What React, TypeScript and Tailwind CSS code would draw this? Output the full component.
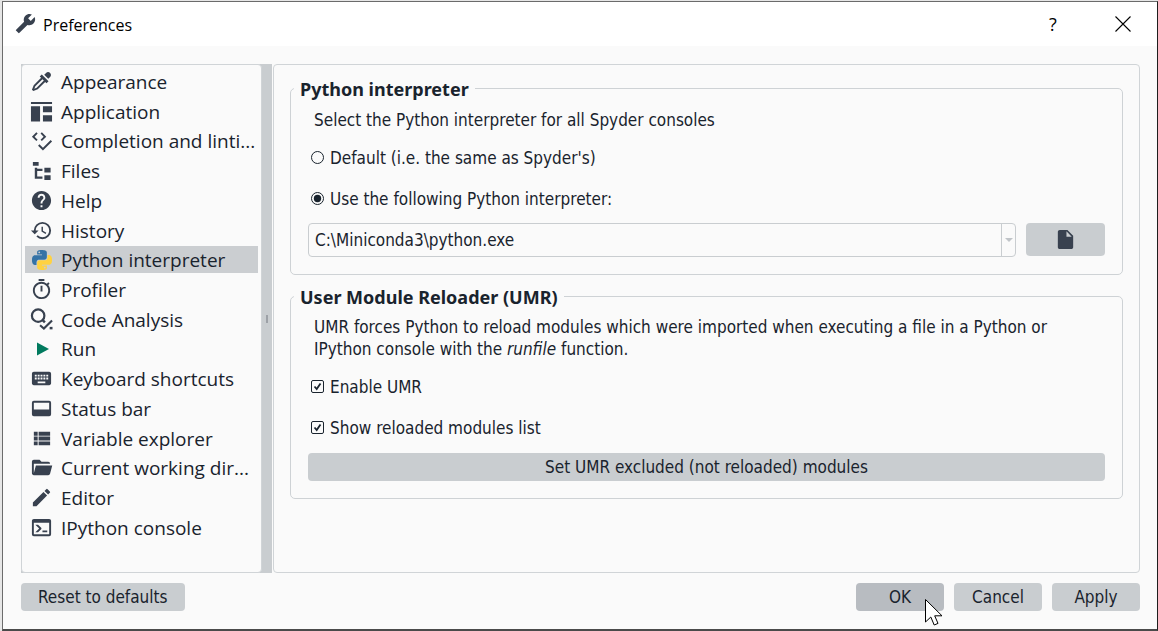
import { useState, type ReactNode } from "react";
import {
  MdEdit,
  MdHelp,
  MdHistory,
  MdInsertDriveFile,
  MdKeyboard,
  MdOutlineTimer,
} from "react-icons/md";

function Glyph({ d, className = "h-[23px] w-[23px]" }: { d: string; className?: string }) {
  return (
    <svg viewBox="0 0 24 24" fill="currentColor" fillRule="evenodd" className={className} aria-hidden="true">
      <path d={d} />
    </svg>
  );
}

const WRENCH =
  "M1.3,19L10.4,9.9C9.5,7.6 10,4.9 11.9,3C13.9,1 16.9,0.6 19.3,1.7L15,6L18,9L22.4,4.7C23.6,7.1 23.1,10.1 21.1,12.1C19.2,14 16.5,14.5 14.2,13.6L5.1,22.7C4.7,23.1 4.1,23.1 3.7,22.7L1.4,20.4C0.9,20 0.9,19.3 1.3,19Z";
const EYEDROPPER =
  "M19.35,11.72L17.22,13.85L15.81,12.43L8.1,20.14L3.5,22L2,20.5L3.86,15.9L11.57,8.19L10.15,6.78L12.28,4.65L19.35,11.72M16.76,3C17.93,1.83 19.83,1.83 21,3C22.17,4.17 22.17,6.07 21,7.24L19.08,9.16L14.84,4.92L16.76,3M5.56,17.03L4.5,19.5L6.97,18.44L14.4,11L13,9.6L5.56,17.03Z";
const LAYOUT = "M1,2H23V4.3H1V2M1,6.5H10.5V22.5H1V6.5M13.5,6.5H23V12.8H13.5V6.5M13.5,16H23V22.5H13.5V16Z";
const CODE_CHECK =
  "M6.59,3.41L2,8L6.59,12.6L8,11.18L4.82,8L8,4.82L6.59,3.41M12.41,3.41L11,4.82L14.18,8L11,11.18L12.41,12.6L17,8L12.41,3.41M21.59,11.59L13.5,19.68L9.83,16L8.42,17.41L13.5,22.5L23,13L21.59,11.59Z";
const FILE_TREE =
  "M3,3H9V7H3V3M15,9H21.5V14H15V9M15,17H21.5V22H15V17M13,12.5H7.5V18.2H13V20.6H7L5,20.6V9H7.5V10.3H13V12.5Z";
const DOCK_BOTTOM =
  "M20,4H4A2,2 0 0,0 2,6V18A2,2 0 0,0 4,20H20A2,2 0 0,0 22,18V6A2,2 0 0,0 20,4M20,13H4V6H20V13Z";
const VIEW_LIST = "M9,5V9H21V5M9,19H21V15H9M9,14H21V10H9M4,9H8V5H4M4,19H8V15H4M4,14H8V10H4V14Z";
const FOLDER_OPEN =
  "M19,20H4C2.89,20 2,19.1 2,18V6C2,4.89 2.89,4 4,4H10L12,6H19A2,2 0 0,1 21,8H21L4,8V18L6.14,10H23.21L20.93,18.5C20.7,19.37 19.92,20 19,20Z";
const CONSOLE =
  "M20,19V7H4V19H20M20,3A2,2 0 0,1 22,5V19A2,2 0 0,1 20,21H4A2,2 0 0,1 2,19V5C2,3.89 2.9,3 4,3H20M13,17V15H18V17H13M9.58,13L5.57,9H8.4L11.7,12.3C12.09,12.69 12.09,13.33 11.7,13.72L8.42,17H5.59L9.58,13Z";

function PythonLogo() {
  return (
    <svg viewBox="0 0 24 24" fillRule="evenodd" className="h-5 w-5" aria-hidden="true">
      <path
        fill="#3573a6"
        d="M14.25.18l.9.2.73.26.59.3.45.32.34.34.25.34.16.33.1.3.04.26.02.2-.01.13V8.5l-.05.63-.13.55-.21.46-.26.38-.3.31-.33.25-.35.19-.35.14-.33.1-.3.07-.26.04-.21.02H8.77l-.69.05-.59.14-.5.22-.41.27-.33.32-.27.35-.2.36-.15.37-.1.35-.07.32-.04.27-.02.21v3.06H3.17l-.21-.03-.28-.07-.32-.12-.35-.18-.36-.26-.36-.36-.35-.46-.32-.59-.28-.73-.21-.88-.14-1.05-.05-1.23.06-1.22.16-1.04.24-.87.32-.71.36-.57.4-.44.42-.33.42-.24.4-.16.36-.1.32-.05.24-.01h.16l.06.01h8.16v-.83H6.18l-.01-2.75-.02-.37.05-.34.11-.31.17-.28.25-.26.31-.23.38-.2.44-.18.51-.15.58-.12.64-.1.71-.06.77-.04.84-.02 1.27.05zm-6.3 1.98l-.23.33-.08.41.08.41.23.34.33.22.41.09.41-.09.33-.22.23-.34.08-.41-.08-.41-.23-.33-.33-.22-.41-.09-.41.09z"
      />
      <path
        fill="#ffd241"
        d="M21.04 6.11l.28.06.32.12.35.18.36.27.36.35.35.47.32.59.28.73.21.88.14 1.04.05 1.23-.06 1.23-.16 1.04-.24.86-.32.71-.36.57-.4.45-.42.33-.42.24-.4.16-.36.09-.32.05-.24.02-.16-.01h-8.22v.82h5.84l.01 2.76.02.36-.05.34-.11.31-.17.29-.25.25-.31.24-.38.2-.44.17-.51.15-.58.13-.64.09-.71.07-.77.04-.84.01-1.27-.04-1.07-.14-.9-.2-.73-.25-.59-.3-.45-.33-.34-.34-.25-.34-.16-.33-.1-.3-.04-.25-.02-.2.01-.13v-5.34l.05-.64.13-.54.21-.46.26-.38.3-.32.33-.24.35-.2.35-.14.33-.1.3-.06.26-.04.21-.02.13-.01h5.84l.69-.05.59-.14.5-.21.41-.28.33-.32.27-.35.2-.36.15-.36.1-.35.07-.32.04-.28.02-.21V6.07h2.09l.14.01zm-6.47 14.25l-.23.33-.08.41.08.41.23.33.33.23.41.08.41-.08.33-.23.23-.33.08-.41-.08-.41-.23-.33-.33-.23-.41-.08-.41.08z"
      />
    </svg>
  );
}

function CodeAnalysisIcon() {
  return (
    <svg viewBox="0 0 24 24" fill="none" stroke="currentColor" className="h-[23px] w-[23px]" aria-hidden="true">
      <circle cx="8.5" cy="8" r="6.5" strokeWidth="2.3" />
      <path d="M13 12.5l2.5 2.5" strokeWidth="2.6" />
      <path d="M10.5 18l4 3.5L23 13" strokeWidth="2.2" />
      <path d="M20.5 21h3" strokeWidth="2.6" />
    </svg>
  );
}

function RunIcon() {
  return (
    <svg viewBox="0 0 12 14" className="ml-[3px] h-[14px] w-3" aria-hidden="true">
      <path d="M0 0.5L12 7L0 13.5Z" fill="#007a5e" />
    </svg>
  );
}

const PAGES: { label: string; title?: string; icon: ReactNode }[] = [
  { label: "Appearance", icon: <Glyph d={EYEDROPPER} /> },
  { label: "Application", icon: <Glyph d={LAYOUT} /> },
  { label: "Completion and linti...", title: "Completion and linting", icon: <Glyph d={CODE_CHECK} /> },
  { label: "Files", icon: <Glyph d={FILE_TREE} /> },
  { label: "Help", icon: <MdHelp className="h-[23px] w-[23px]" /> },
  { label: "History", icon: <MdHistory className="h-[23px] w-[23px]" /> },
  { label: "Python interpreter", icon: <PythonLogo /> },
  { label: "Profiler", icon: <MdOutlineTimer className="h-[23px] w-[23px]" /> },
  { label: "Code Analysis", icon: <CodeAnalysisIcon /> },
  { label: "Run", icon: <RunIcon /> },
  { label: "Keyboard shortcuts", icon: <MdKeyboard className="h-[23px] w-[23px]" /> },
  { label: "Status bar", icon: <Glyph d={DOCK_BOTTOM} /> },
  { label: "Variable explorer", icon: <Glyph d={VIEW_LIST} /> },
  { label: "Current working dir...", title: "Current working directory", icon: <Glyph d={FOLDER_OPEN} /> },
  { label: "Editor", icon: <MdEdit className="h-[23px] w-[23px]" /> },
  { label: "IPython console", icon: <Glyph d={CONSOLE} /> },
];

function TitleBar() {
  return (
    <header className="flex h-11 items-center bg-white pl-3 pr-[22px] font-['Open_Sans','Noto_Sans',sans-serif] text-black">
      <Glyph d={WRENCH} className="mb-0.5 h-[21px] w-[21px] text-[#38414f]" />
      <h1 className="ml-[7px] flex-1 pt-px text-base leading-6">Preferences</h1>
      <button type="button" aria-label="Help" className="w-8 text-lg leading-6">
        ?
      </button>
      <button type="button" aria-label="Close" className="ml-[42px] flex h-6 w-6 items-center justify-center">
        <svg viewBox="0 0 16 16" className="h-4 w-4" stroke="currentColor" strokeWidth="1.1" aria-hidden="true">
          <path d="M0.5 0.5L15.5 15.5M15.5 0.5L0.5 15.5" />
        </svg>
      </button>
    </header>
  );
}

function Sidebar({ page, onSelect }: { page: string; onSelect: (label: string) => void }) {
  return (
    <nav className="w-[241px] shrink-0 rounded border border-[#d0d4d7] bg-[#fafafa] px-[3px] pt-[3px]">
      <ul className="flex h-[473px] flex-col justify-between font-['Open_Sans','Noto_Sans',sans-serif] text-[19px]">
        {PAGES.map((p) => (
          <li key={p.label}>
            <button
              type="button"
              title={p.title}
              onClick={() => onSelect(p.label)}
              className={
                p.label === page
                  ? "flex h-[27px] w-full items-center whitespace-nowrap bg-[#cbced1] pl-[5px] text-left"
                  : "flex h-[27px] w-full items-center whitespace-nowrap pl-[5px] text-left"
              }
            >
              <span className="flex w-[23px] shrink-0 justify-center text-[#38414f]">{p.icon}</span>
              <span className="ml-2 pt-0.5 leading-[27px]">{p.label}</span>
            </button>
          </li>
        ))}
      </ul>
    </nav>
  );
}

function Group({ title, children }: { title: string; children: ReactNode }) {
  return (
    <fieldset className="min-w-0 rounded-[5px] border border-[#ced2d5] px-[17px] pb-[17px]">
      <legend className="-ml-[14px] px-[6px] pt-0.5 font-['Noto_Sans','Open_Sans',sans-serif] text-lg font-bold leading-[22px]">
        {title}
      </legend>
      {children}
    </fieldset>
  );
}

function Choice({
  type,
  label,
  checked,
  onChange,
}: {
  type: "radio" | "checkbox";
  label: string;
  checked: boolean;
  onChange: () => void;
}) {
  return (
    <label className="flex w-fit items-center gap-1.5 pl-[3px] leading-[22px]">
      <span className="relative h-[13px] w-[13px]">
        <input
          type={type}
          name={type === "radio" ? "interpreter" : undefined}
          checked={checked}
          onChange={onChange}
          className={
            type === "radio"
              ? "block h-[13px] w-[13px] appearance-none rounded-full border border-[#19232d]"
              : "block h-[13px] w-[13px] appearance-none rounded-[2px] border border-[#19232d]"
          }
        />
        {checked && (
          <svg viewBox="0 0 13 13" className="pointer-events-none absolute inset-0 h-[13px] w-[13px]" aria-hidden="true">
            {type === "radio" ? (
              <circle cx="6.5" cy="6.5" r="3.7" fill="#19232d" />
            ) : (
              <path d="M3.5 6.5L5.7 9L9.5 3.5" fill="none" stroke="#19232d" strokeWidth="1.8" />
            )}
          </svg>
        )}
      </span>
      <span className="pt-px">{label}</span>
    </label>
  );
}

function InterpreterGroup() {
  const [custom, setCustom] = useState(true);
  const [path, setPath] = useState("C:\\Miniconda3\\python.exe");
  return (
    <Group title="Python interpreter">
      <p className="mt-[9px] pl-1.5 leading-[22px]">Select the Python interpreter for all Spyder consoles</p>
      <div className="mt-[15px]">
        <Choice
          type="radio"
          label="Default (i.e. the same as Spyder's)"
          checked={!custom}
          onChange={() => setCustom(false)}
        />
      </div>
      <div className="mt-[18px]">
        <Choice
          type="radio"
          label="Use the following Python interpreter:"
          checked={custom}
          onChange={() => setCustom(true)}
        />
      </div>
      <div className="mt-[13px] flex gap-2.5">
        <div className="flex h-[34px] flex-1 rounded border border-[#c9cdd0]">
          <input
            type="text"
            aria-label="Python interpreter path"
            value={path}
            onChange={(e) => setPath(e.target.value)}
            className="min-w-0 flex-1 bg-transparent px-1.5 pt-0.5 outline-none"
          />
          <button
            type="button"
            aria-label="Show interpreters"
            className="flex w-[14px] items-center justify-center border-l border-[#c9cdd0]"
          >
            <svg viewBox="0 0 8 4" className="h-1 w-2" aria-hidden="true">
              <path d="M0 0H8L4 4Z" fill="#c0c4c8" />
            </svg>
          </button>
        </div>
        <button
          type="button"
          aria-label="Select file"
          className="flex h-[33px] w-[79px] items-center justify-center rounded bg-[#c9cdd0] text-[#38414f]"
        >
          <MdInsertDriveFile className="h-[23px] w-[23px]" />
        </button>
      </div>
    </Group>
  );
}

function ReloaderGroup() {
  const [enabled, setEnabled] = useState(true);
  const [showList, setShowList] = useState(true);
  return (
    <Group title="User Module Reloader (UMR)">
      <p className="mt-2 pl-1.5 leading-[22px]">
        UMR forces Python to reload modules which were imported when executing a file in a Python or
        <br />
        IPython console with the <em>runfile</em> function.
      </p>
      <div className="mt-[15px]">
        <Choice type="checkbox" label="Enable UMR" checked={enabled} onChange={() => setEnabled(!enabled)} />
      </div>
      <div className="mt-[18px]">
        <Choice
          type="checkbox"
          label="Show reloaded modules list"
          checked={showList}
          onChange={() => setShowList(!showList)}
        />
      </div>
      <button type="button" className="mt-[14px] block h-7 w-full rounded bg-[#c9cdd0] pt-0.5">
        Set UMR excluded (not reloaded) modules
      </button>
    </Group>
  );
}

function Footer() {
  return (
    <footer className="mt-2.5 flex gap-2.5">
      <button type="button" className="mr-auto h-7 rounded bg-[#c9cdd0] px-[17px] pt-0.5">
        Reset to defaults
      </button>
      <button type="button" className="relative h-7 w-[88px] rounded bg-[#b8bcc1] pt-0.5">
        OK
        <svg viewBox="0 0 18 27" className="absolute left-[69px] top-4 h-[27px] w-[18px]" aria-hidden="true">
          <path
            d="M0.5 0.5V23L5.8 18L9.2 26L13 24.4L9.7 16.8H17Z"
            fill="#fff"
            stroke="#000"
            strokeWidth="1"
          />
        </svg>
      </button>
      <button type="button" className="h-7 w-[88px] rounded bg-[#c9cdd0] pt-0.5">
        Cancel
      </button>
      <button type="button" className="h-7 w-[88px] rounded bg-[#c9cdd0] pt-0.5">
        Apply
      </button>
    </footer>
  );
}

export default function App() {
  const [page, setPage] = useState("Python interpreter");
  return (
    <div className="flex min-h-screen flex-col bg-[#e6e6e6] pl-0.5 pt-px">
      <div className="flex flex-1 flex-col border border-b-2 border-[#6b6b6b] border-b-[#4a4a4a] border-r-[#1e1e1e] bg-[#fafafa] font-['DejaVu_Sans_Condensed','Noto_Sans',sans-serif] text-[17px] text-[#19232d]">
        <TitleBar />
        <main className="flex flex-1 flex-col pb-[18px] pl-[18px] pr-[17px] pt-[18px]">
          <div className="flex flex-1 bg-[#c9cdd0]">
            <Sidebar page={page} onSelect={setPage} />
            <div className="flex w-[10px] shrink-0 items-center justify-center">
              <span className="h-2 w-0.5 bg-[#9da1a7]" />
            </div>
            <div className="min-w-0 flex-1 bg-[#fafafa] pl-px">
              <section className="flex h-full flex-col gap-[9px] rounded border border-[#d0d4d7] px-4 pt-[11px]">
                <InterpreterGroup />
                <ReloaderGroup />
              </section>
            </div>
          </div>
          <Footer />
        </main>
      </div>
    </div>
  );
}
